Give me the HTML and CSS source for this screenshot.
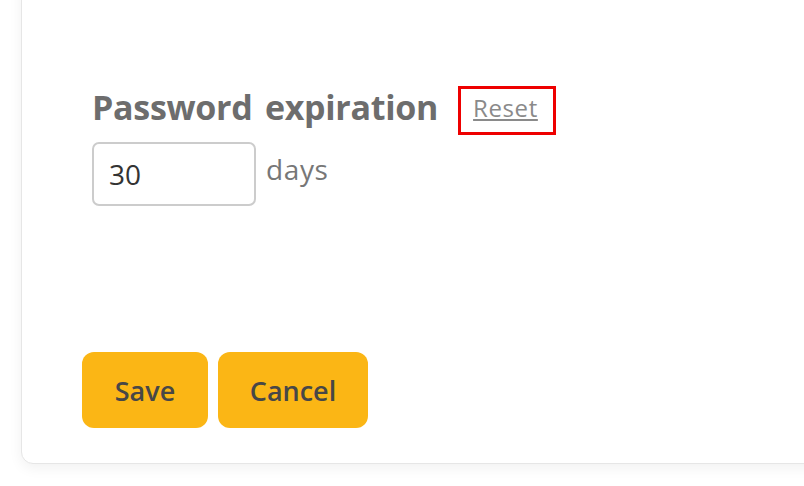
FILE: index.html
```html
<!DOCTYPE html>
<html>
<head>
<meta charset="utf-8">
<link rel="stylesheet" href="styles.css">
</head>
<body>
<div class="page">
  <div class="card">
    <div class="field">
      <div class="label-row">
        <span class="label">Password expiration</span>
        <span class="reset-box"><a class="reset" href="#">Reset</a></span>
      </div>
      <div class="input-row">
        <div class="input">30</div>
        <span class="unit">days</span>
      </div>
    </div>
    <div class="actions">
      <button class="btn">Save</button>
      <button class="btn btn-wide">Cancel</button>
    </div>
  </div>
</div>
</body>
</html>
```
FILE: styles.css
```css
html, body {
  margin: 0;
  padding: 0;
  background: #ffffff;
}
body {
  font-family: "Open Sans", "Noto Sans", sans-serif;
  width: 804px;
  height: 486px;
  overflow: hidden;
}
.page {
  padding-left: 21px;
}
.card {
  margin-top: -20px;
  width: 830px;
  height: 484px;
  box-sizing: border-box;
  background: #fff;
  border: 1px solid #e6e6e6;
  border-radius: 12px;
  box-shadow: 0 4px 14px rgba(0,0,0,0.06);
  padding: 105px 0 35px 60px;
  display: flex;
  flex-direction: column;
  justify-content: space-between;
}
.field {
  padding-left: 10px;
}
.label-row {
  display: flex;
  align-items: flex-start;
  gap: 20px;
}
.label {
  font-size: 34px;
  line-height: 40px;
  margin-top: 1px;
  font-weight: 700;
  color: #6d6d6d;
  letter-spacing: -0.3px;
  word-spacing: 4px;
}
.reset-box {
  display: block;
  border: 3px solid #ee0000;
  padding: 0 15px 6px 12px;
  line-height: 37px;
  height: 37px;
}
.reset {
  font-size: 24px;
  color: #8a8a8a;
  text-decoration: underline;
  letter-spacing: 0.6px;
}
.input-row {
  display: flex;
  align-items: flex-start;
  gap: 10px;
  margin-top: 7px;
}
.input {
  width: 164px;
  height: 64px;
  box-sizing: border-box;
  border: 2px solid #cccccc;
  border-radius: 7px;
  padding-left: 15px;
  font-size: 28px;
  line-height: 61px;
  color: #333;
}
.unit {
  font-size: 28px;
  color: #777;
  line-height: 54px;
  letter-spacing: 0.6px;
}
.actions {
  display: flex;
  gap: 10px;
}
.btn {
  font-family: "Open Sans", "Noto Sans", sans-serif;
  font-size: 27px;
  font-weight: 600;
  color: #474747;
  background: #fbb615;
  border: none;
  border-radius: 12px;
  height: 76px;
  width: 126px;
  padding: 0;
}
.btn-wide {
  width: 150px;
}
```
